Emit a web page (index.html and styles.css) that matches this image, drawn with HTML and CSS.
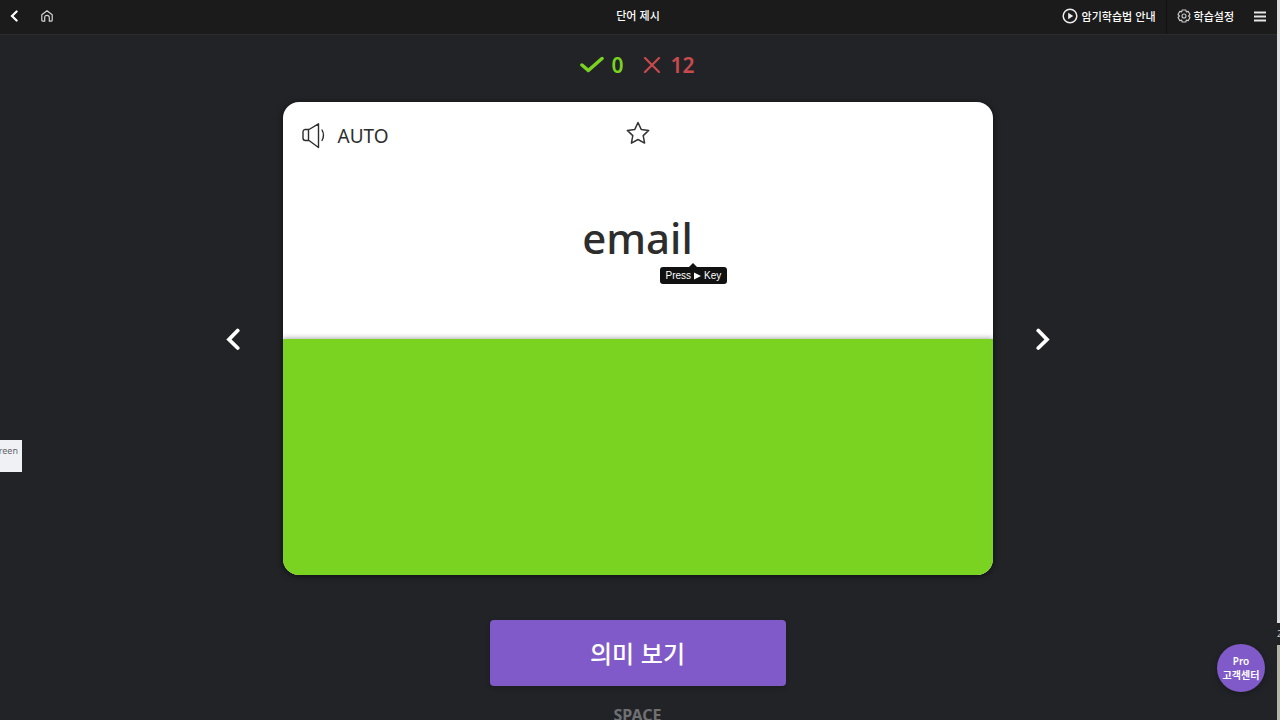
FILE: index.html
```html
<!DOCTYPE html>
<html lang="ko">
<head>
<meta charset="utf-8">
<meta name="viewport" content="width=device-width, initial-scale=1">
<title>단어 제시</title>
<link rel="stylesheet" href="styles.css">
</head>
<body>
<div class="app">
  <header class="topbar">
    <nav class="topbar-left">
      <button class="icon-btn" type="button" aria-label="뒤로">
        <svg width="8" height="12" viewBox="0 0 8 12"><path d="M6.600 1.500 2 6l4.600 4.500" fill="none" stroke="#fff" stroke-width="2.200" stroke-linecap="round"/></svg>
      </button>
      <a class="icon-btn" href="#" aria-label="홈">
        <svg width="12" height="12" viewBox="0 0 12 12"><path d="M.8 4.700 6 .8l5.200 3.900v5.500q0 1-1 1H8.300V7.500Q8.300 5.300 6 5.300T3.700 7.500v3.700H1.800q-1 0-1-1z" fill="none" stroke="#d5d5d5" stroke-width="1.200" stroke-linejoin="round"/></svg>
      </a>
    </nav>
    <h1 class="topbar-title">단어 제시</h1>
    <div class="topbar-right">
      <button class="tool guide" type="button">
        <svg width="16" height="16" viewBox="0 0 16 16"><circle cx="8" cy="8" r="6.800" fill="none" stroke="#eee" stroke-width="1.500"/><path d="M6.200 4.800v6.400L11.200 8z" fill="#eee"/></svg>
        <span>암기학습법 안내</span>
      </button>
      <button class="tool settings" type="button">
        <svg width="14" height="14" viewBox="0 0 14 14" fill="none" stroke="#ccc" stroke-width="1.100" stroke-linejoin="round"><path d="M5.200 1h3.600l.5 1.900 1.900-.5L13 5.500 11.600 7 13 8.500l-1.800 3.100-1.900-.5-.5 1.900H5.200l-.5-1.900-1.900.5L1 8.500 2.400 7 1 5.500l1.800-3.100 1.900.5z"/><circle cx="7" cy="7" r="2"/></svg>
        <span>학습설정</span>
      </button>
      <button class="tool menu" type="button" aria-label="메뉴">
        <svg width="12" height="11" viewBox="0 0 12 11"><path d="M0 1.500h12M0 5.500h12M0 9.500h12" stroke="#e6e6e6" stroke-width="1.800"/></svg>
      </button>
    </div>
  </header>

  <main class="study">
    <div class="score">
      <span class="score-item right">
        <svg width="24" height="20" viewBox="0 0 24 20"><path d="M2 9 8.300 14.500 22 2.500" fill="none" stroke="#7ad321" stroke-width="3.500" stroke-linecap="round" stroke-linejoin="round"/></svg>
        <span>0</span>
      </span>
      <span class="score-item wrong">
        <svg width="18" height="18" viewBox="0 0 18 18"><path d="M2 1l14 14M16 1 2 15" stroke="#c84a4d" stroke-width="2.200" stroke-linecap="round"/></svg>
        <span>12</span>
      </span>
    </div>

    <section class="stage">
      <button class="arrow" type="button" aria-label="이전">
        <svg width="14" height="24" viewBox="0 0 14 24"><path d="M11.700 3.500 3 12.500l8.700 8.500" fill="none" stroke="#fff" stroke-width="3.800" stroke-linecap="round"/></svg>
      </button>
      <article class="card">
        <div class="front">
          <div class="card-tools">
            <button class="sound" type="button">
              <svg width="24" height="26" viewBox="0 0 24 26" fill="none" stroke="#2d2d2d" stroke-width="1.400" stroke-linejoin="round" stroke-linecap="round"><path d="M7 6.500H3.500Q1 6.500 1 9v6q0 2.500 2.500 2.500H7L16.500 24.500V.8zM6.500 7v10M20 7q3 5 0 10.500"/></svg>
              <span>AUTO</span>
            </button>
            <button class="star" type="button" aria-label="즐겨찾기">
              <svg width="24" height="24" viewBox="0 0 24 24"><path d="M12 1.500l3.200 6.900 7.500 1-5.500 5.200 1.400 7.500L12 18.500l-6.600 3.600 1.400-7.500L1.300 9.400l7.500-1z" fill="none" stroke="#333" stroke-width="1.500" stroke-linejoin="round"/></svg>
            </button>
          </div>
          <p class="word">email</p>
          <div class="tip" role="tooltip">Press <svg width="7" height="8" viewBox="0 0 7 8"><path d="M0 .5 7 4 0 7.500z" fill="#fff"/></svg> Key</div>
        </div>
        <div class="back"></div>
      </article>
      <button class="arrow" type="button" aria-label="다음">
        <svg width="14" height="24" viewBox="0 0 14 24"><path d="M2.300 3.500l8.700 9L2.300 21" fill="none" stroke="#fff" stroke-width="3.800" stroke-linecap="round"/></svg>
      </button>
    </section>

    <button class="reveal" type="button">의미 보기</button>
    <p class="key-hint">SPACE</p>
  </main>

  <div class="screen-tag">reen</div>
  <button class="support" type="button">Pro<br>고객센터</button>
</div>
<aside class="edge"><span class="edge-top"></span><span class="edge-mid">2</span><span class="edge-low"></span></aside>
</body>
</html>
```
FILE: styles.css
```css
* { box-sizing: border-box; }

body {
  margin: 0;
  height: 100vh;
  overflow: hidden;
  display: flex;
  background: #222327;
  color: #fff;
  font-family: "Noto Sans", "Noto Sans CJK KR", sans-serif;
}

button {
  margin: 0;
  padding: 0;
  border: 0;
  background: none;
  color: inherit;
  font: inherit;
  cursor: pointer;
}

svg { display: block; flex: none; }
h1, p { margin: 0; }

.app {
  position: relative;
  flex: 1;
  min-width: 0;
}

.topbar {
  display: grid;
  grid-template-columns: 1fr auto 1fr;
  align-items: center;
  height: 35px;
  padding-right: 1px;
  background: #1b1b1b;
  border-bottom: 1px solid #2b2c2f;
  font-family: "Noto Sans CJK KR", sans-serif;
  font-size: 11px;
}

.topbar-left {
  display: flex;
  align-items: center;
  gap: 23px;
  padding: 0 10px 3px;
}

.topbar-title {
  padding-bottom: 4px;
  font-size: 11px;
  line-height: 16px;
  font-weight: 500;
}

.topbar-right {
  display: flex;
  justify-content: flex-end;
  align-self: stretch;
  font-weight: 500;
}

.tool {
  display: flex;
  align-items: center;
  gap: 4px;
  padding: 0 10px 2px;
  line-height: 16px;
  white-space: nowrap;
}

.guide { border-right: 1px solid #111; }
.settings { gap: 3px; }

.study {
  display: flex;
  flex-direction: column;
  align-items: center;
  padding-right: 2px;
}

.score {
  display: flex;
  gap: 20px;
  padding: 15px 0 21px;
  font-size: 21px;
  line-height: 31px;
  font-weight: 600;
}

.score-item {
  display: flex;
  align-items: center;
  gap: 7px;
}

.right { color: #7ad321; }

.wrong {
  gap: 9px;
  color: #c84a4d;
}

.stage {
  display: flex;
  justify-content: center;
  align-items: center;
  gap: 43px;
  width: 100%;
}

.card {
  display: flex;
  flex-direction: column;
  flex: 0 1 710px;
  aspect-ratio: 3 / 2;
  border-radius: 16px;
  overflow: hidden;
  background: #fff;
  color: #2d2d2d;
  box-shadow: 0 1px 6px #0009;
}

.front {
  position: relative;
  flex: 1;
}

.back {
  flex: 1;
  background: #7ad321;
  box-shadow: 0 -1px 5px #0005;
}

.card-tools {
  display: grid;
  grid-template-columns: 1fr auto 1fr;
  align-items: start;
  padding: 19px 19px 0;
}

.sound {
  display: flex;
  align-items: center;
  gap: 12px;
  padding-top: 1px;
  font-size: 19px;
  line-height: 28px;
}

.word {
  padding-top: 58px;
  font-size: 42px;
  line-height: 60px;
  font-weight: 500;
  text-align: center;
}

.tip {
  position: absolute;
  top: 165px;
  left: calc(50% + 22px);
  display: flex;
  align-items: center;
  gap: 3px;
  padding: 0 6px;
  border-radius: 3px;
  background: #111;
  color: #fff;
  font: 10px/17px "Liberation Sans", sans-serif;
}

.tip::before {
  content: "";
  position: absolute;
  left: 50%;
  bottom: 100%;
  margin-left: -4px;
  border: 4px solid transparent;
  border-top: 0;
  border-bottom-color: #111;
}

.reveal {
  width: 296px;
  margin-top: 45px;
  border-radius: 4px;
  background: #7f5ac8;
  box-shadow: 0 2px 5px #0003;
  font-family: "Noto Sans CJK KR", sans-serif;
  font-size: 24px;
  line-height: 66px;
  font-weight: 500;
}

.key-hint {
  margin-top: 18px;
  color: #6f7073;
  font-size: 16px;
  line-height: 22px;
  font-weight: 700;
}

.screen-tag {
  position: absolute;
  left: 0;
  top: 440px;
  width: 22px;
  height: 32px;
  background: #f0f1f5;
  color: #666;
  font-size: 9px;
  line-height: 21px;
  direction: rtl;
  padding-right: 4px;
  overflow: hidden;
}

.support {
  position: absolute;
  right: 12px;
  bottom: 28px;
  width: 48px;
  height: 48px;
  border-radius: 50%;
  background: #7f5ac8;
  box-shadow: 0 2px 6px #0004;
  font-size: 10px;
  line-height: 14px;
  font-weight: 600;
  white-space: nowrap;
}

.edge {
  display: flex;
  flex-direction: column;
  width: 3px;
  overflow: hidden;
  background: #dcdce1;
}

.edge-top { flex: 1; }

.edge-mid {
  height: 22px;
  background: #222;
  color: #ccc;
  font-size: 9px;
  line-height: 22px;
}

.edge-low {
  height: 75px;
  background: #b5b6aa;
}
```
